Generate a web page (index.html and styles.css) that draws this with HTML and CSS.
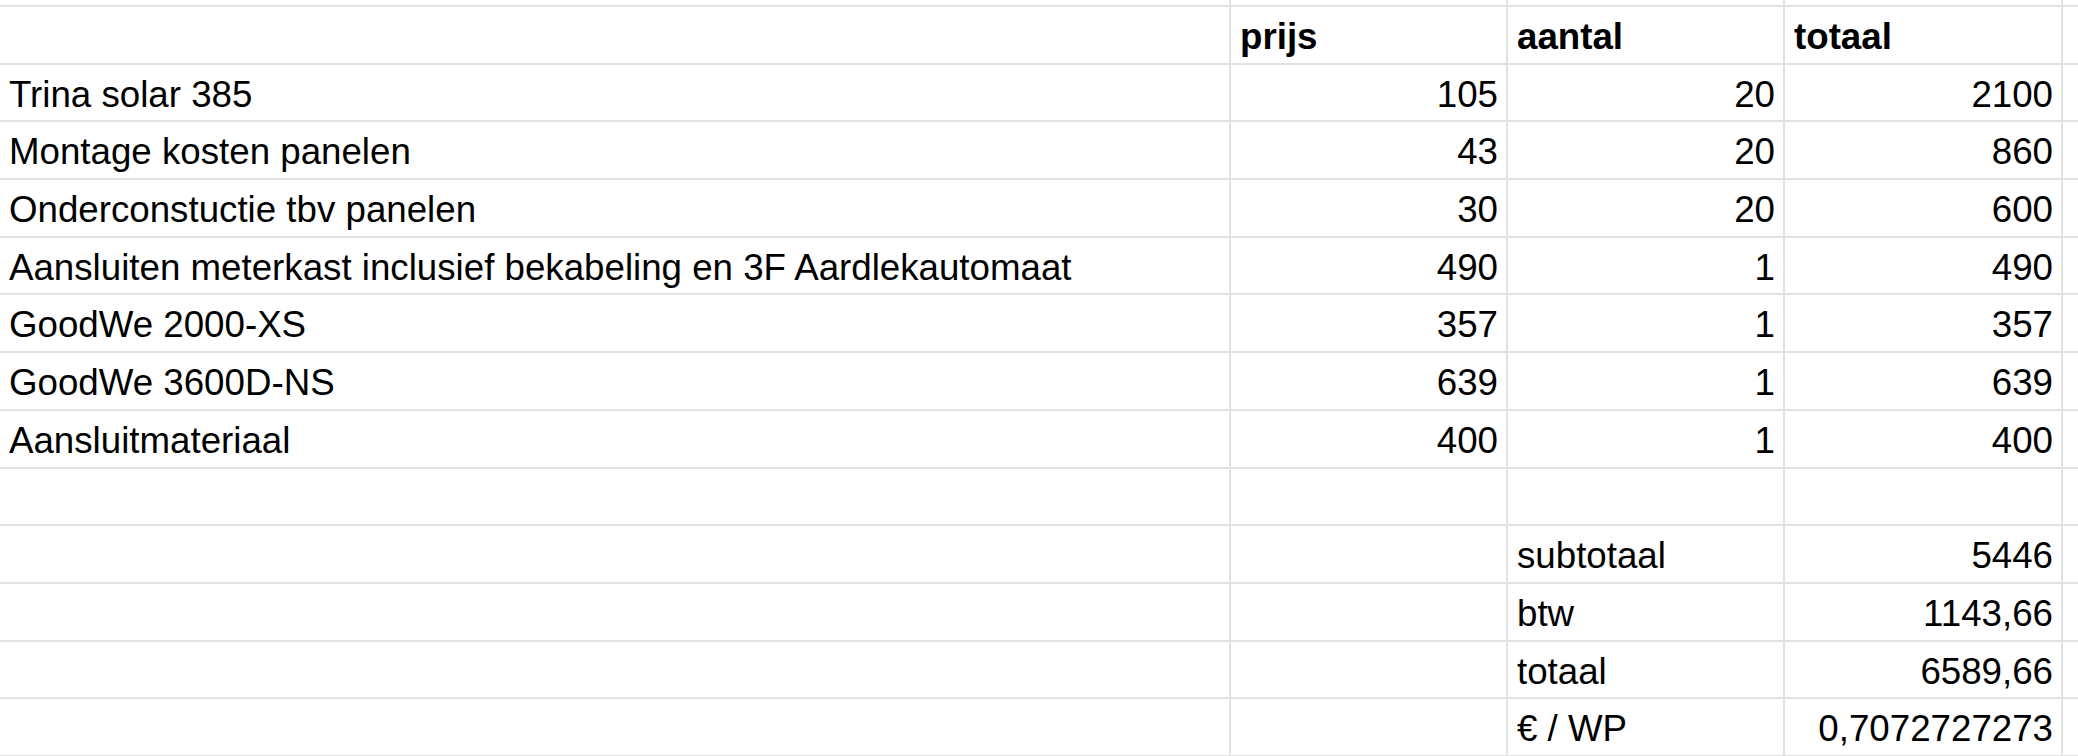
FILE: index.html
```html
<!DOCTYPE html>
<html lang="nl">
<head>
<meta charset="utf-8">
<title>Offerte zonnepanelen</title>
<link rel="stylesheet" href="styles.css">
</head>
<body>
<div class="sheet">
  <div class="row spacer"><div class="c"></div><div class="c"></div><div class="c"></div><div class="c"></div><div class="c"></div></div>
  <div class="row head"><div class="c"></div><div class="c">prijs</div><div class="c">aantal</div><div class="c">totaal</div><div class="c"></div></div>
  <div class="row"><div class="c">Trina solar 385</div><div class="c n">105</div><div class="c n">20</div><div class="c n">2100</div><div class="c"></div></div>
  <div class="row"><div class="c">Montage kosten panelen</div><div class="c n">43</div><div class="c n">20</div><div class="c n">860</div><div class="c"></div></div>
  <div class="row"><div class="c">Onderconstuctie tbv panelen</div><div class="c n">30</div><div class="c n">20</div><div class="c n">600</div><div class="c"></div></div>
  <div class="row"><div class="c">Aansluiten meterkast inclusief bekabeling en 3F Aardlekautomaat</div><div class="c n">490</div><div class="c n">1</div><div class="c n">490</div><div class="c"></div></div>
  <div class="row"><div class="c">GoodWe 2000-XS</div><div class="c n">357</div><div class="c n">1</div><div class="c n">357</div><div class="c"></div></div>
  <div class="row"><div class="c">GoodWe 3600D-NS</div><div class="c n">639</div><div class="c n">1</div><div class="c n">639</div><div class="c"></div></div>
  <div class="row"><div class="c">Aansluitmateriaal</div><div class="c n">400</div><div class="c n">1</div><div class="c n">400</div><div class="c"></div></div>
  <div class="row"><div class="c"></div><div class="c"></div><div class="c"></div><div class="c"></div><div class="c"></div></div>
  <div class="row"><div class="c"></div><div class="c"></div><div class="c">subtotaal</div><div class="c n">5446</div><div class="c"></div></div>
  <div class="row"><div class="c"></div><div class="c"></div><div class="c">btw</div><div class="c n">1143,66</div><div class="c"></div></div>
  <div class="row"><div class="c"></div><div class="c"></div><div class="c">totaal</div><div class="c n">6589,66</div><div class="c"></div></div>
  <div class="row"><div class="c"></div><div class="c"></div><div class="c">€ / WP</div><div class="c n">0,7072727273</div><div class="c"></div></div>
</div>
</body>
</html>
```

FILE: styles.css
```css
html, body {
  margin: 0;
  padding: 0;
  background: #ffffff;
  overflow: hidden;
}

.sheet {
  display: grid;
  grid-template-columns: 1231px 277px 277px 278px 1fr;
  grid-template-rows: 7px;
  grid-auto-rows: 57.7px;
  width: 2078px;
  font-family: "Liberation Sans", Arial, sans-serif;
  font-size: 36.7px;
  color: #000000;
}

.row {
  display: contents;
}

.c {
  box-sizing: border-box;
  border-right: 2px solid #e2e2e2;
  border-bottom: 2px solid #e2e2e2;
  padding: 2px 9px 0;
  line-height: 55.7px;
  white-space: nowrap;
  overflow: hidden;
}

.spacer .c {
  height: 7px;
  padding: 0;
}

.head .c {
  font-weight: bold;
}

.n {
  text-align: right;
  padding-right: 8px;
}
```
